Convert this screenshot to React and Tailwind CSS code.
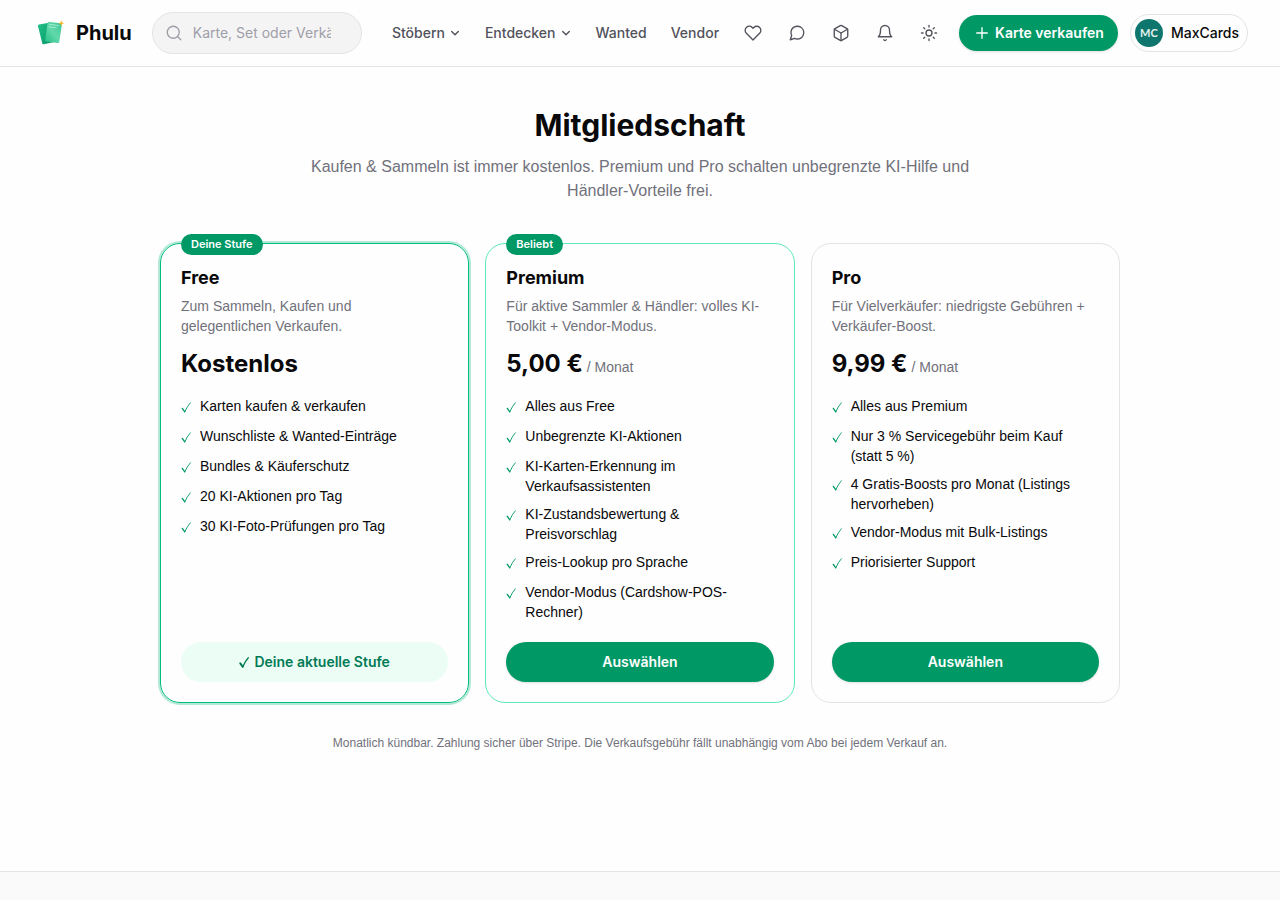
import { FiHeart, FiMessageCircle, FiBox, FiBell, FiSearch } from "react-icons/fi";
import { Sun, Plus } from "lucide-react";

const plans = [
  {
    name: "Free",
    badge: "Deine Stufe",
    text: "Zum Sammeln, Kaufen und gelegentlichen\u00a0Verkaufen.",
    price: "Kostenlos",
    current: true,
    frame: "border-[#00bc7d] ring-2 ring-[#00bc7d]/30",
    features: [
      "Karten kaufen & verkaufen",
      "Wunschliste & Wanted-Einträge",
      "Bundles & Käuferschutz",
      "20 KI-Aktionen pro Tag",
      "30 KI-Foto-Prüfungen pro Tag",
    ],
  },
  {
    name: "Premium",
    badge: "Beliebt",
    text: "Für aktive Sammler & Händler: volles KI-Toolkit + Vendor-Modus.",
    price: "5,00 €",
    monthly: true,
    frame: "border-[#5ee9b5]",
    features: [
      "Alles aus Free",
      "Unbegrenzte KI-Aktionen",
      "KI-Karten-Erkennung im Verkaufsassistenten",
      "KI-Zustandsbewertung & Preisvorschlag",
      "Preis-Lookup pro Sprache",
      "Vendor-Modus (Cardshow-POS-Rechner)",
    ],
  },
  {
    name: "Pro",
    text: "Für Vielverkäufer: niedrigste Gebühren + Verkäufer-Boost.",
    price: "9,99 €",
    monthly: true,
    frame: "border-[#e4e4e7]",
    features: [
      "Alles aus Premium",
      "Nur 3 % Servicegebühr beim Kauf (statt\u00a05\u00a0%)",
      "4 Gratis-Boosts pro Monat (Listings hervorheben)",
      "Vendor-Modus mit Bulk-Listings",
      "Priorisierter Support",
    ],
  },
];

const tools = [
  { label: "Wunschliste", Icon: FiHeart },
  { label: "Nachrichten", Icon: FiMessageCircle },
  { label: "Bestellungen", Icon: FiBox },
  { label: "Mitteilungen", Icon: FiBell },
  { label: "Helles Design", Icon: Sun },
];

function Logo() {
  return (
    <svg viewBox="0 0 36 36" className="size-9 shrink-0" aria-hidden="true">
      <defs>
        <linearGradient id="back" x1="0" y1="0" x2="1" y2="1">
          <stop offset="0" stopColor="#20c18a" />
          <stop offset="1" stopColor="#079565" />
        </linearGradient>
        <linearGradient id="front" x1="0" y1="1" x2="1" y2="0">
          <stop offset="0" stopColor="#24bd86" />
          <stop offset="0.5" stopColor="#62d9ab" />
          <stop offset="1" stopColor="#38c692" />
        </linearGradient>
      </defs>
      <path d="M7 9.6L18.5 7.4 21 27.2 11.8 29.3Q10.6 29.5 10.3 28.4L6 11.2Q5.8 9.9 7 9.6z" fill="url(#back)" />
      <path d="M17.2 7L28.5 8.3Q30 8.6 29.8 10L27.3 26.8Q27 28.2 25.6 28L14.2 26.6Q12.9 26.4 13.1 25L15.500 8.300Q15.8 6.9 17.2 7z" fill="url(#front)" />
      <path d="M17.5 9.3l9 1.2M17.2 11.8l7 .9" stroke="#b9f3da" strokeWidth="0.8" strokeLinecap="round" />
      <path d="M29.300 5.300l.8 2.100 2.100.8-2.100.8-.8 2.100-.8-2.100-2-.8 2-.8z" fill="#fbb524" />
    </svg>
  );
}

function Chevron() {
  return (
    <svg viewBox="0 0 12 12" className="size-3" fill="none" stroke="currentColor" strokeWidth="1.4" strokeLinecap="round" strokeLinejoin="round" aria-hidden="true">
      <path d="M2.700 4.500L6 7.800l3.300-3.300" />
    </svg>
  );
}

function Tick({ strokeWidth }) {
  return (
    <svg viewBox="0 0 11 14" className="h-3.5 w-[11px]" fill="none" stroke="currentColor" strokeLinecap="round" strokeLinejoin="round" aria-hidden="true">
      <path d="M1.300 8.400L3.800 11.800" strokeWidth={strokeWidth * 1.5} />
      <path d="M3.800 11.800Q6 6.500 9.300 2.800" strokeWidth={strokeWidth} />
    </svg>
  );
}

function Header() {
  return (
    <header className="border-b border-[#e4e4e7]">
      <div className="mx-auto flex h-[66px] max-w-7xl items-center px-8">
        <a href="#" className="flex shrink-0 items-center gap-2 text-xl font-bold">
          <Logo />
          Phulu
        </a>
        <label className="ml-5 flex h-[42px] w-[210px] min-w-0 items-center gap-2.5 rounded-full border border-[#e4e4e7] bg-[#f4f4f5] pr-[30px] pl-3 text-[#9f9fa9]">
          <FiSearch className="size-[18px] shrink-0" strokeWidth={1.8} />
          <input
            type="text"
            aria-label="Suche"
            placeholder="Karte, Set oder Verkäufer suchen"
            className="w-full min-w-0 text-sm outline-none placeholder:text-[#9f9fa9]"
          />
        </label>
        <nav className="ml-auto flex shrink-0 items-center text-sm font-medium text-[#52525c]">
          <button className="flex items-center gap-1 px-3">
            Stöbern
            <Chevron />
          </button>
          <button className="flex items-center gap-1 px-3">
            Entdecken
            <Chevron />
          </button>
          <a href="#wanted" className="px-3">Wanted</a>
          <a href="#vendor" className="px-3">Vendor</a>
          {tools.map(({ label, Icon }) => (
            <button key={label} aria-label={label} className="flex size-11 items-center justify-center">
              <Icon className="size-[18px]" strokeWidth={1.8} />
            </button>
          ))}
        </nav>
        <button className="ml-2 flex h-9 shrink-0 items-center gap-1 rounded-full bg-[#009966] px-[14px] text-sm font-semibold text-white shadow-sm">
          <Plus className="size-[18px]" strokeWidth={1.8} />
          Karte verkaufen
        </button>
        <button className="ml-3 flex h-[38px] shrink-0 items-center gap-2 rounded-full border border-[#e4e4e7] pr-2 pl-1 text-sm font-medium">
          <span className="flex size-7 items-center justify-center rounded-full bg-[#0f766e] font-[Lato] text-[11px] font-bold text-white/90">
            MC
          </span>
          MaxCards
        </button>
      </div>
    </header>
  );
}

function Plan({ plan }) {
  return (
    <section className={`relative flex flex-col rounded-[20px] border p-5 ${plan.frame}`}>
      {plan.badge && (
        <span className="absolute -top-2.5 left-5 rounded-full bg-[#009966] px-2.5 text-[11px] leading-[21px] font-semibold text-white">
          {plan.badge}
        </span>
      )}
      <h2 className="text-lg leading-7 font-bold">{plan.name}</h2>
      <p className="mt-1 font-['Liberation_Sans',sans-serif] text-sm text-[#71717b]">{plan.text}</p>
      <p className="mt-3 text-2xl font-bold">
        {plan.price}
        {plan.monthly && (
          <span className="font-['Liberation_Sans',sans-serif] text-sm font-normal text-[#71717b]"> / Monat</span>
        )}
      </p>
      <ul className="mt-4 flex flex-1 flex-col gap-2 font-['Liberation_Sans',sans-serif] text-sm">
        {plan.features.map((feature) => (
          <li key={feature} className="flex items-start gap-2">
            <span className="flex h-[22px] items-center text-[#009966]">
              <Tick strokeWidth={0.9} />
            </span>
            <span>{feature}</span>
          </li>
        ))}
      </ul>
      {plan.current ? (
        <p className="mt-5 flex h-10 items-center justify-center gap-1 rounded-full bg-[#ecfdf5] text-sm font-semibold text-[#007a55]">
          <Tick strokeWidth={1.3} />
          Deine aktuelle Stufe
        </p>
      ) : (
        <button className="mt-5 h-10 rounded-full bg-[#009966] text-sm font-semibold text-white shadow-sm">
          Auswählen
        </button>
      )}
    </section>
  );
}

export default function App() {
  return (
    <div className="flex min-h-screen flex-col bg-[#fefefe] font-[Inter,sans-serif] text-[#09090b]">
      <Header />
      <main className="mx-auto w-full max-w-5xl px-8 pt-10 pb-[120px]">
        <h1 className="text-center text-3xl font-bold">Mitgliedschaft</h1>
        <p className="mx-auto mt-3 max-w-2xl text-center font-['Liberation_Sans',sans-serif] text-base text-[#71717b]">
          Kaufen & Sammeln ist immer kostenlos. Premium und Pro schalten unbegrenzte KI-Hilfe und
          Händler-Vorteile frei.
        </p>
        <div className="mt-10 grid grid-cols-3 gap-4">
          {plans.map((plan) => (
            <Plan key={plan.name} plan={plan} />
          ))}
        </div>
        <p className="mt-8 text-center font-['Liberation_Sans',sans-serif] text-xs text-[#71717b]">
          Monatlich kündbar. Zahlung sicher über Stripe. Die Verkaufsgebühr fällt unabhängig vom Abo bei jedem Verkauf an.
        </p>
      </main>
      <footer className="flex-1 border-t border-[#e4e4e7] bg-[#fafafa]" />
    </div>
  );
}
